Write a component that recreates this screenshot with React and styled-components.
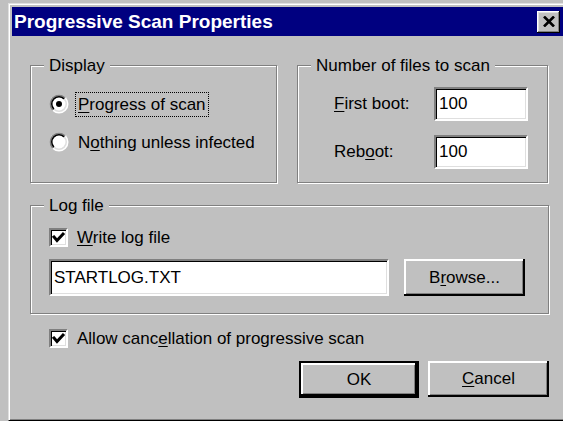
import React from 'react';
import styled, { createGlobalStyle } from 'styled-components';

const GlobalStyle = createGlobalStyle`
  html, body {
    margin: 0;
    padding: 0;
  }
  body {
    width: 563px;
    height: 421px;
    overflow: hidden;
    background: #c0c0c0;
    font-family: "Liberation Sans", Arial, sans-serif;
    font-size: 17px;
    color: #000;
  }
`;

const RadioMark = ({ checked }) => (
  <svg width="20" height="20" viewBox="0 0 20 20">
    <circle cx="10" cy="10" r="9.5" fill="#fff" />
    <path d="M3.28 16.72 A9.5 9.5 0 0 1 16.72 3.28 Z" fill="#808080" />
    <circle cx="10" cy="10" r="8" fill="#dfdfdf" />
    <path d="M4.34 15.66 A8 8 0 0 1 15.66 4.34 Z" fill="#000" />
    <circle cx="10" cy="10" r="6.5" fill="#fff" />
    {checked && <circle cx="10" cy="10" r="3" fill="#000" />}
  </svg>
);

const CheckMark = () => (
  <svg width="15" height="15" viewBox="0 0 15 15">
    <polyline points="3,7 6,10.5 12,4" fill="none" stroke="#000" strokeWidth="3" strokeLinecap="square" />
  </svg>
);

const CloseGlyph = () => (
  <svg width="12" height="11" viewBox="0 0 12 11">
    <path d="M1 0.5 L11 10.5 M11 0.5 L1 10.5" stroke="#000" strokeWidth="2.6" />
  </svg>
);

const ProgressiveScanDialog = () => {
  return (
    <Page>
      <GlobalStyle />
      <Window>
        <TitleBar>
          <Title>Progressive Scan Properties</Title>
          <CloseButton>
            <CloseGlyph />
          </CloseButton>
        </TitleBar>
        <Body>
          <Content>
            <TopRow>
              <Group $h={118}>
                <Caption>Display</Caption>
                <RadioList>
                  <Option>
                    <RadioMark checked />
                    <OptionLabel $focused>
                      <Key>P</Key>rogress of scan
                    </OptionLabel>
                  </Option>
                  <Option>
                    <RadioMark />
                    <OptionLabel>
                      N<Key>o</Key>thing unless infected
                    </OptionLabel>
                  </Option>
                </RadioList>
              </Group>
              <Group $h={118}>
                <Caption>Number of files to scan</Caption>
                <CountGrid>
                  <span>
                    <Key>F</Key>irst boot:
                  </span>
                  <TextBox $w={94} $h={34}>100</TextBox>
                  <span>
                    Reb<Key>o</Key>ot:
                  </span>
                  <TextBox $w={94} $h={34}>100</TextBox>
                </CountGrid>
              </Group>
            </TopRow>

            <Group $h={109}>
              <Caption>Log file</Caption>
              <LogBody>
                <Option>
                  <CheckBox>
                    <CheckMark />
                  </CheckBox>
                  <OptionLabel>
                    <Key>W</Key>rite log file
                  </OptionLabel>
                </Option>
                <FileRow>
                  <TextBox $w={340} $h={37}>STARTLOG.TXT</TextBox>
                  <Button $w={121} $h={37}>
                    B<Key>r</Key>owse...
                  </Button>
                </FileRow>
              </LogBody>
            </Group>

            <AllowRow>
              <CheckBox>
                <CheckMark />
              </CheckBox>
              <OptionLabel>
                Allow canc<Key>e</Key>llation of progressive scan
              </OptionLabel>
            </AllowRow>

            <ButtonRow>
              <Button $w={120} $h={37} $default>
                OK
              </Button>
              <Button $w={121} $h={36}>
                <Key>C</Key>ancel
              </Button>
            </ButtonRow>
          </Content>
        </Body>
      </Window>
    </Page>
  );
};

export default ProgressiveScanDialog;

const Page = styled.div`
  padding: 3px 0 0 8px;
`;

const Window = styled.div`
  box-sizing: border-box;
  width: 560px;
  height: 418px;
  padding: 2px;
  background: #c0c0c0;
  border: 1px solid;
  border-color: #dfdfdf #000 #000 #dfdfdf;
  box-shadow: inset 1px 1px #fff, inset -1px -1px #808080;
  display: flex;
  flex-direction: column;
`;

const TitleBar = styled.div`
  height: 29px;
  margin: 1px 1px 0 1px;
  background: #000080;
  display: flex;
  align-items: center;
  justify-content: space-between;
  padding: 0 4px 0 2px;
`;

const Title = styled.span`
  color: #fff;
  font-weight: bold;
  font-size: 19px;
  line-height: 29px;
`;

const CloseButton = styled.div`
  box-sizing: border-box;
  width: 23px;
  height: 22px;
  background: #c0c0c0;
  display: flex;
  align-items: center;
  justify-content: center;
  box-shadow: inset -1px -1px #000, inset 1px 1px #fff, inset -2px -2px #808080, inset 2px 2px #dfdfdf;
`;

const Body = styled.div`
  padding: 29px 0 0 19px;
`;

const Content = styled.div`
  width: 519px;
  display: flex;
  flex-direction: column;
`;

const TopRow = styled.div`
  display: grid;
  grid-template-columns: 247px 251px;
  column-gap: 20px;
  margin-bottom: 22px;
`;

const Group = styled.div`
  box-sizing: border-box;
  height: ${(p) => p.$h}px;
  border: 1px solid #808080;
  box-shadow: inset 1px 1px #fff, 1px 1px #fff;
  display: flex;
  flex-direction: column;
`;

const Caption = styled.span`
  align-self: flex-start;
  margin: -10px 0 0 13px;
  padding: 0 5px;
  line-height: 19px;
  background: #c0c0c0;
`;

const RadioList = styled.div`
  display: flex;
  flex-direction: column;
  gap: 12px;
  padding: 16px 0 0 18px;
`;

const Option = styled.div`
  display: flex;
  align-items: center;
  height: 26px;
`;

const OptionLabel = styled.span`
  margin-left: 6px;
  padding: 0 2px;
  line-height: 23px;
  border: 1px dotted ${(p) => (p.$focused ? '#000' : 'transparent')};
`;

const Key = styled.span`
  text-decoration: underline;
  text-underline-offset: 2px;
`;

const CountGrid = styled.div`
  display: grid;
  grid-template-columns: 100px 94px;
  row-gap: 14px;
  align-items: center;
  padding: 12px 0 0 36px;
`;

const TextBox = styled.div`
  box-sizing: border-box;
  width: ${(p) => p.$w}px;
  height: ${(p) => p.$h}px;
  background: #fff;
  border: 2px solid;
  border-color: #808080 #fff #fff #808080;
  box-shadow: inset 1px 1px #000, inset -1px -1px #dfdfdf;
  padding: 0 3px;
  display: flex;
  align-items: center;
`;

const LogBody = styled.div`
  display: flex;
  flex-direction: column;
  gap: 9px;
  padding: 9px 0 0 18px;
`;

const FileRow = styled.div`
  display: flex;
  gap: 15px;
`;

const CheckBox = styled.div`
  box-sizing: border-box;
  width: 19px;
  height: 19px;
  background: #fff;
  border: 2px solid;
  border-color: #808080 #fff #fff #808080;
  box-shadow: inset 1px 1px #000, inset -1px -1px #dfdfdf;
  display: flex;
  align-items: center;
  justify-content: center;
`;

const AllowRow = styled(Option)`
  margin: 11px 0 0 19px;
`;

const ButtonRow = styled.div`
  display: flex;
  justify-content: flex-end;
  align-items: flex-start;
  gap: 9px;
  margin-top: 10px;
`;

const Button = styled.div`
  box-sizing: border-box;
  width: ${(p) => p.$w}px;
  height: ${(p) => p.$h}px;
  background: #c0c0c0;
  border: ${(p) => (p.$default ? '2px solid #000' : 'none')};
  box-shadow: inset -2px -2px #000, inset 2px 2px #fff, inset -3px -3px #808080;
  display: flex;
  align-items: center;
  justify-content: center;
`;
